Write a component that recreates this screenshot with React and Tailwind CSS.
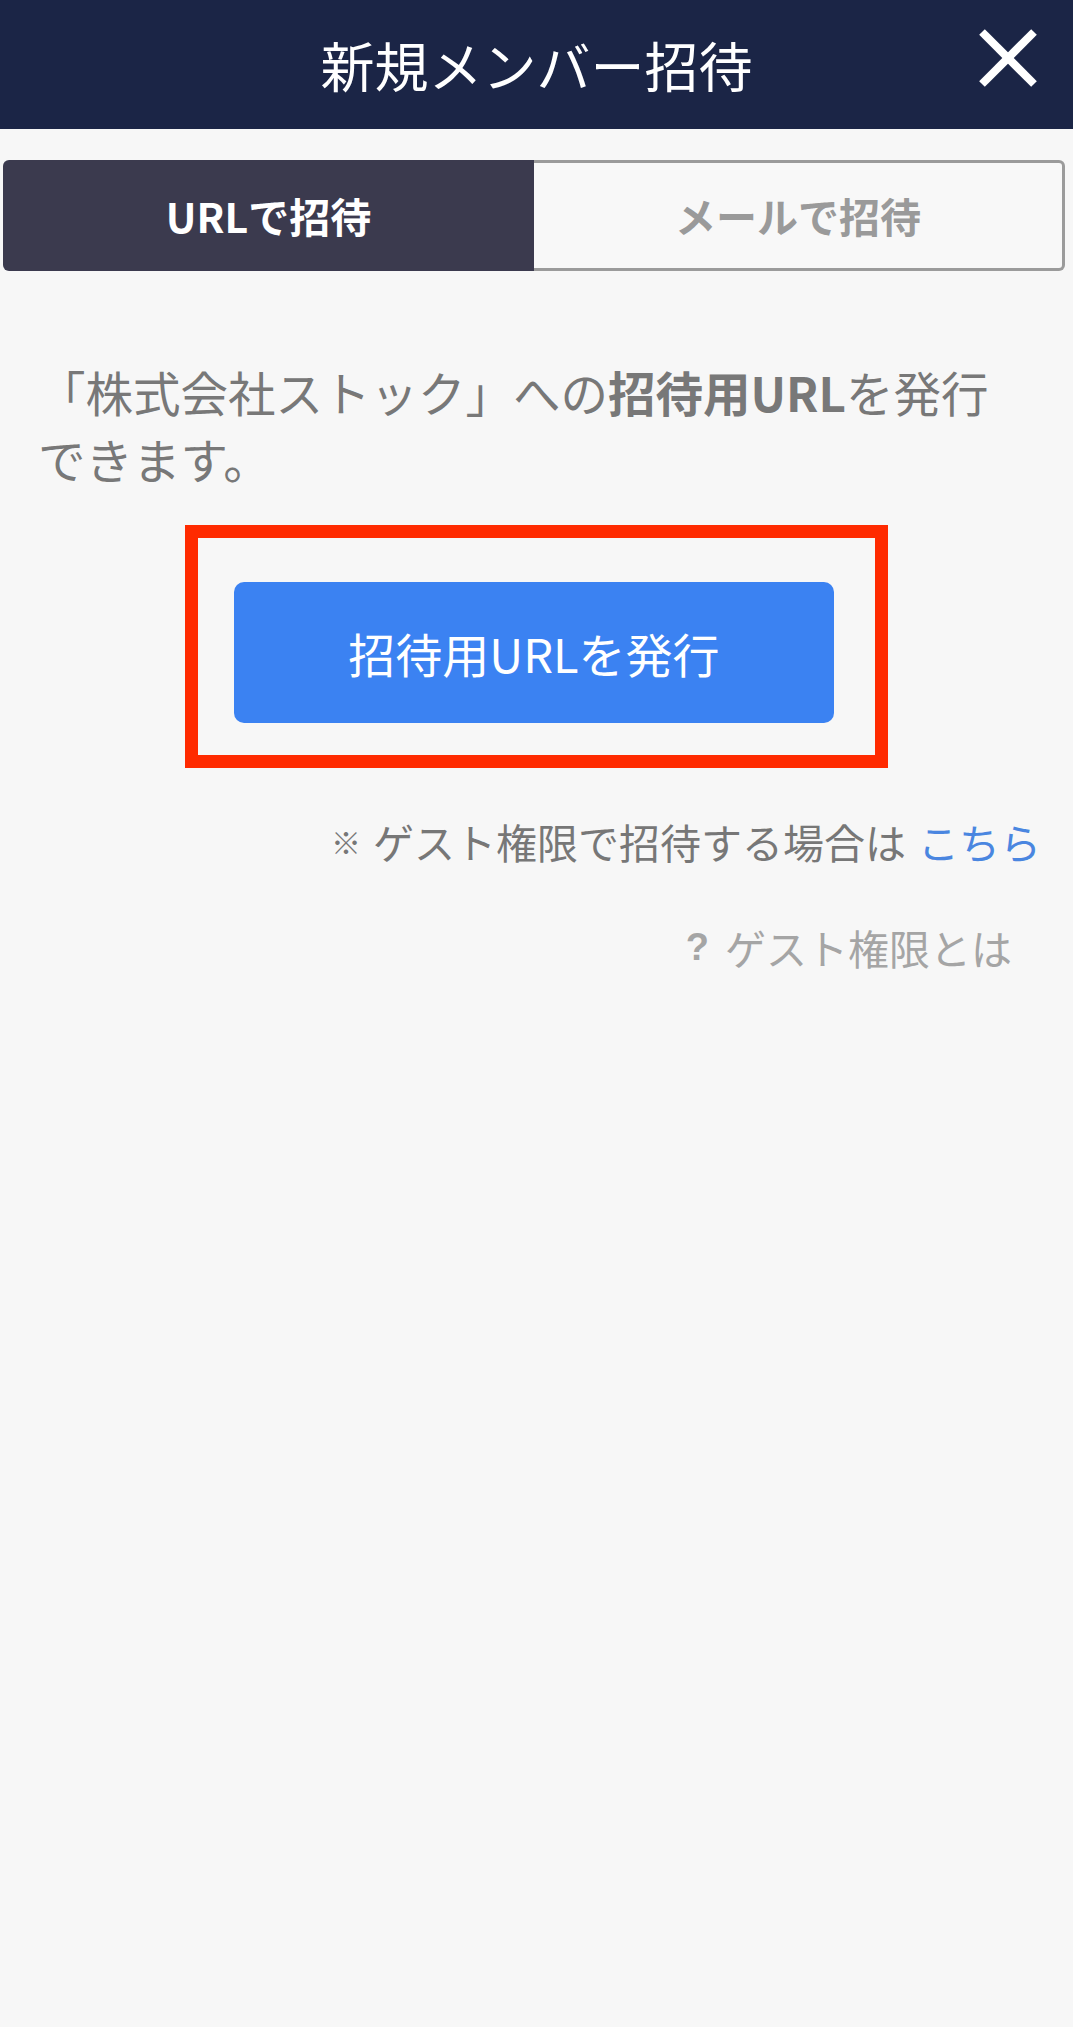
export default function App() {
  const font = { fontFamily: '"Noto Sans CJK JP", "Noto Sans", sans-serif' };
  return (
    <div className="min-h-screen bg-[#f7f7f7]" style={font}>
      <header className="relative h-[129px] bg-[#1b2546] flex items-center justify-center">
        <h1 className="text-[54px] leading-none text-white font-normal">新規メンバー招待</h1>
        <button className="absolute right-[36px] top-[29px] w-[58px] h-[58px]" aria-label="close">
          <svg viewBox="0 0 58 58" width="58" height="58">
            <line x1="3" y1="3" x2="55" y2="55" stroke="#fff" strokeWidth="8" />
            <line x1="55" y1="3" x2="3" y2="55" stroke="#fff" strokeWidth="8" />
          </svg>
        </button>
      </header>

      <div className="mt-[31px] ml-[3px] w-[1062px] h-[111px] flex">
        <div className="w-[531px] h-full bg-[#3b3a4e] rounded-l-[6px] flex items-center justify-center">
          <span className="text-[41px] font-bold text-white leading-none">URLで招待</span>
        </div>
        <div className="flex-1 h-full border-[3px] border-l-0 border-[#9b9b9b] rounded-r-[6px] bg-[#f8f8f8] flex items-center justify-center">
          <span className="text-[41px] font-bold text-[#9a9a9a] leading-none">メールで招待</span>
        </div>
      </div>

      <p className="mt-[87px] pl-[38px] text-[47.5px] leading-[67px] text-[#787878]">
        「株式会社ストック」への<span className="font-bold">招待用URL</span>を発行
        <br />
        できます。
      </p>

      <div className="mt-[33px] mx-auto w-[703px] border-[13px] border-[#ff2a00] pl-[36px] pr-[41px] pt-[44px] pb-[32px]">
        <button className="w-[600px] h-[141px] rounded-[10px] bg-[#3b82f2] flex items-center justify-center">
          <span className="text-[47px] text-white leading-none">招待用URLを発行</span>
        </button>
      </div>

      <div className="mt-[43px] pr-[32px] h-[60px] flex items-center justify-end text-[41px] text-[#777777]">
        <span className="text-[30px] font-bold mr-[12px] leading-none">※</span>
        <span className="leading-none">ゲスト権限で招待する場合は</span>
        <span className="ml-[12px] text-[#4a86e0] leading-none">こちら</span>
      </div>

      <div className="mt-[46px] pr-[61px] h-[60px] flex items-center justify-end text-[41px] text-[#a5a5a5]">
        <span
          className="text-[38px] font-bold mr-[16px] leading-none"
          style={{ fontFamily: '"Liberation Sans", Arial, sans-serif' }}
        >
          ?
        </span>
        <span className="leading-none">ゲスト権限とは</span>
      </div>
    </div>
  );
}
